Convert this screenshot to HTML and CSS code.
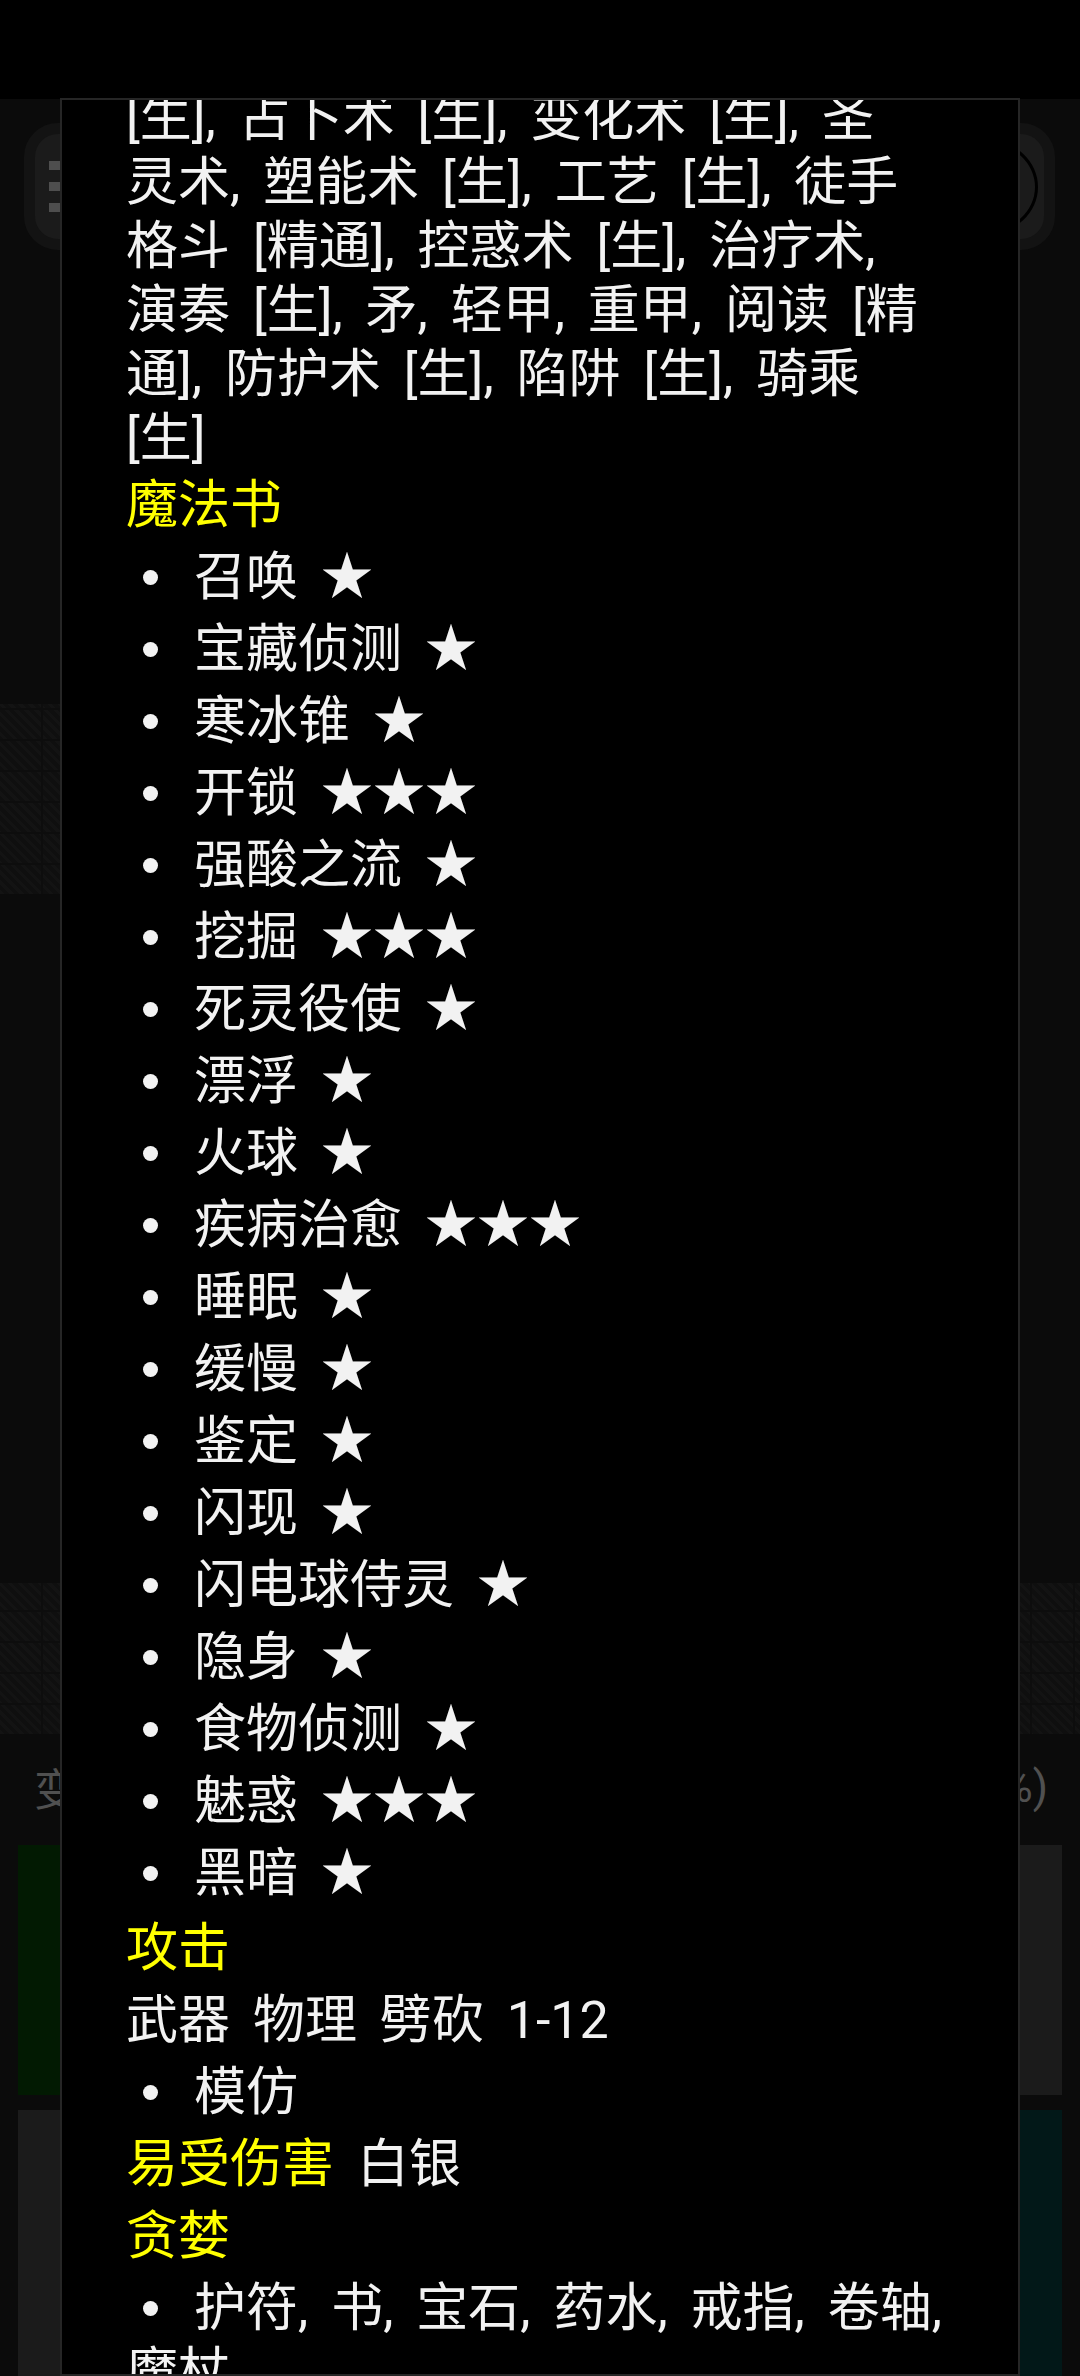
FILE: index.html
```html
<!DOCTYPE html>
<html lang="zh-CN">
<head>
<meta charset="utf-8">
<title>怪物信息</title>
<link rel="stylesheet" href="styles.css">
</head>
<body>
<div class="status"></div>
<div class="game">
  <div class="topbar">
    <div class="btn btn-left">
      <div class="dots"><span></span><span></span><span></span></div>
    </div>
    <div class="btn btn-right"><div class="ring"></div></div>
  </div>
  <div class="map">
    <div class="gap g1"></div>
    <div class="stone stone-left"></div>
    <div class="gap g2"></div>
    <div class="stone stone-wide"></div>
  </div>
  <div class="bottom">
    <div class="label-row"><span class="lbl">变化</span><span class="lbl">%)</span></div>
    <div class="cells">
      <div class="cell green"></div>
      <div class="cell grey"></div>
      <div class="cell grey"></div>
      <div class="cell teal"></div>
    </div>
  </div>
</div>

<div class="dialog">
  <div class="scroll">
    <p class="para">[生], 占卜术 [生], 变化术 [生], 圣<br>灵术, 塑能术 [生], 工艺 [生], 徒手<br>格斗 [精通], 控惑术 [生], 治疗术,<br>演奏 [生], 矛, 轻甲, 重甲, 阅读 [精<br>通], 防护术 [生], 陷阱 [生], 骑乘<br>[生]</p>
    <h3 class="head first">魔法书</h3>
    <ul class="list">
      <li>召唤 ★</li>
      <li>宝藏侦测 ★</li>
      <li>寒冰锥 ★</li>
      <li>开锁 ★★★</li>
      <li>强酸之流 ★</li>
      <li>挖掘 ★★★</li>
      <li>死灵役使 ★</li>
      <li>漂浮 ★</li>
      <li>火球 ★</li>
      <li>疾病治愈 ★★★</li>
      <li>睡眠 ★</li>
      <li>缓慢 ★</li>
      <li>鉴定 ★</li>
      <li>闪现 ★</li>
      <li>闪电球侍灵 ★</li>
      <li>隐身 ★</li>
      <li>食物侦测 ★</li>
      <li>魅惑 ★★★</li>
      <li>黑暗 ★</li>
    </ul>
    <h3 class="head attack">攻击</h3>
    <p class="line">武器 物理 劈砍 1-12</p>
    <ul class="list">
      <li>模仿</li>
    </ul>
    <p class="line"><span class="yellow">易受伤害</span> 白银</p>
    <h3 class="head">贪婪</h3>
    <ul class="list">
      <li>护符, 书, 宝石, 药水, 戒指, 卷轴,<br>魔杖</li>
    </ul>
  </div>
</div>
</body>
</html>
```

FILE: styles.css
```css
html, body {
  margin: 0;
  padding: 0;
}
body {
  width: 1080px;
  height: 2376px;
  overflow: hidden;
  position: relative;
  background: #000;
  font-family: Roboto, "Noto Sans CJK SC", sans-serif;
}

/* ---------- background game screen ---------- */
.status {
  height: 99px;
  background: #000;
}
.game {
  height: 2277px;
  background: #0b0b0b;
  display: flex;
  flex-direction: column;
}
.topbar {
  display: flex;
  justify-content: space-between;
  padding: 24px 25px 0 24px;
  height: 127px;
}
.btn {
  width: 320px;
  height: 127px;
  box-sizing: border-box;
  border: 11px solid #131313;
  background: #1b1b1b;
  border-radius: 34px;
  display: flex;
  align-items: center;
}
.dots {
  display: flex;
  flex-direction: column;
  gap: 12px;
  margin-left: 14px;
}
.dots span {
  width: 11px;
  height: 9px;
  background: #4e4e4e;
}
.btn-right {
  justify-content: flex-end;
}
.ring {
  width: 96px;
  height: 88px;
  border: 3px solid #000;
  border-radius: 50%;
  margin-right: 6px;
}
.map {
  display: flex;
  flex-direction: column;
}
.g1 { height: 454px; }
.g2 { height: 689px; }
.stone {
  background-color: #111;
  background-image:
    repeating-linear-gradient(0deg, transparent 0 29px, #0d0d0d 29px 31px),
    repeating-linear-gradient(90deg, transparent 0 41px, #0d0d0d 41px 43px),
    repeating-linear-gradient(45deg, #131313 0 3px, #0f0f0f 3px 7px);
}
.stone-left {
  width: 70px;
  height: 190px;
}
.stone-wide {
  height: 151px;
}
.bottom {
  flex: 1;
  display: flex;
  flex-direction: column;
}
.label-row {
  height: 106px;
  display: flex;
  justify-content: space-between;
  align-items: center;
  padding: 0 32px 0 34px;
}
.lbl {
  color: #505050;
  font-size: 44px;
}
.cells {
  display: grid;
  grid-template-columns: 1fr 1fr;
  grid-template-rows: 250px 1fr;
  gap: 15px 20px;
  padding: 5px 18px 0 18px;
  flex: 1;
}
.cell.green { background: #021a02; }
.cell.grey { background: #1b1b1b; }
.cell.teal { background: #021818; }

/* ---------- dialog ---------- */
.dialog {
  position: absolute;
  left: 60px;
  top: 98px;
  width: 960px;
  bottom: 0;
  box-sizing: border-box;
  border: 2px solid #262626;
  background: #000;
  overflow: hidden;
}
.scroll {
  margin-top: -13px;
  padding-left: 64px;
  color: #f2f2f2;
  font-size: 52px;
  line-height: 64px;
  word-spacing: 10px;
}
.para, .line, .head, .list {
  margin: 8px 0 0 0;
  padding: 0;
  font-size: 52px;
  font-weight: normal;
}
.para { margin-top: 0; }
.head {
  color: #ffff00;
}
.head.first { margin-top: 3px; }
.head.attack { margin-top: 11px; }
.yellow { color: #ffff00; }
.list {
  list-style: none;
  margin-top: 0;
}
.list li {
  margin-top: 8px;
}
.list li::before {
  content: "";
  display: inline-block;
  width: 15px;
  height: 15px;
  border-radius: 50%;
  background: #f2f2f2;
  margin: 0 36px 0 17px;
  vertical-align: middle;
  position: relative;
  top: -4px;
}
```
